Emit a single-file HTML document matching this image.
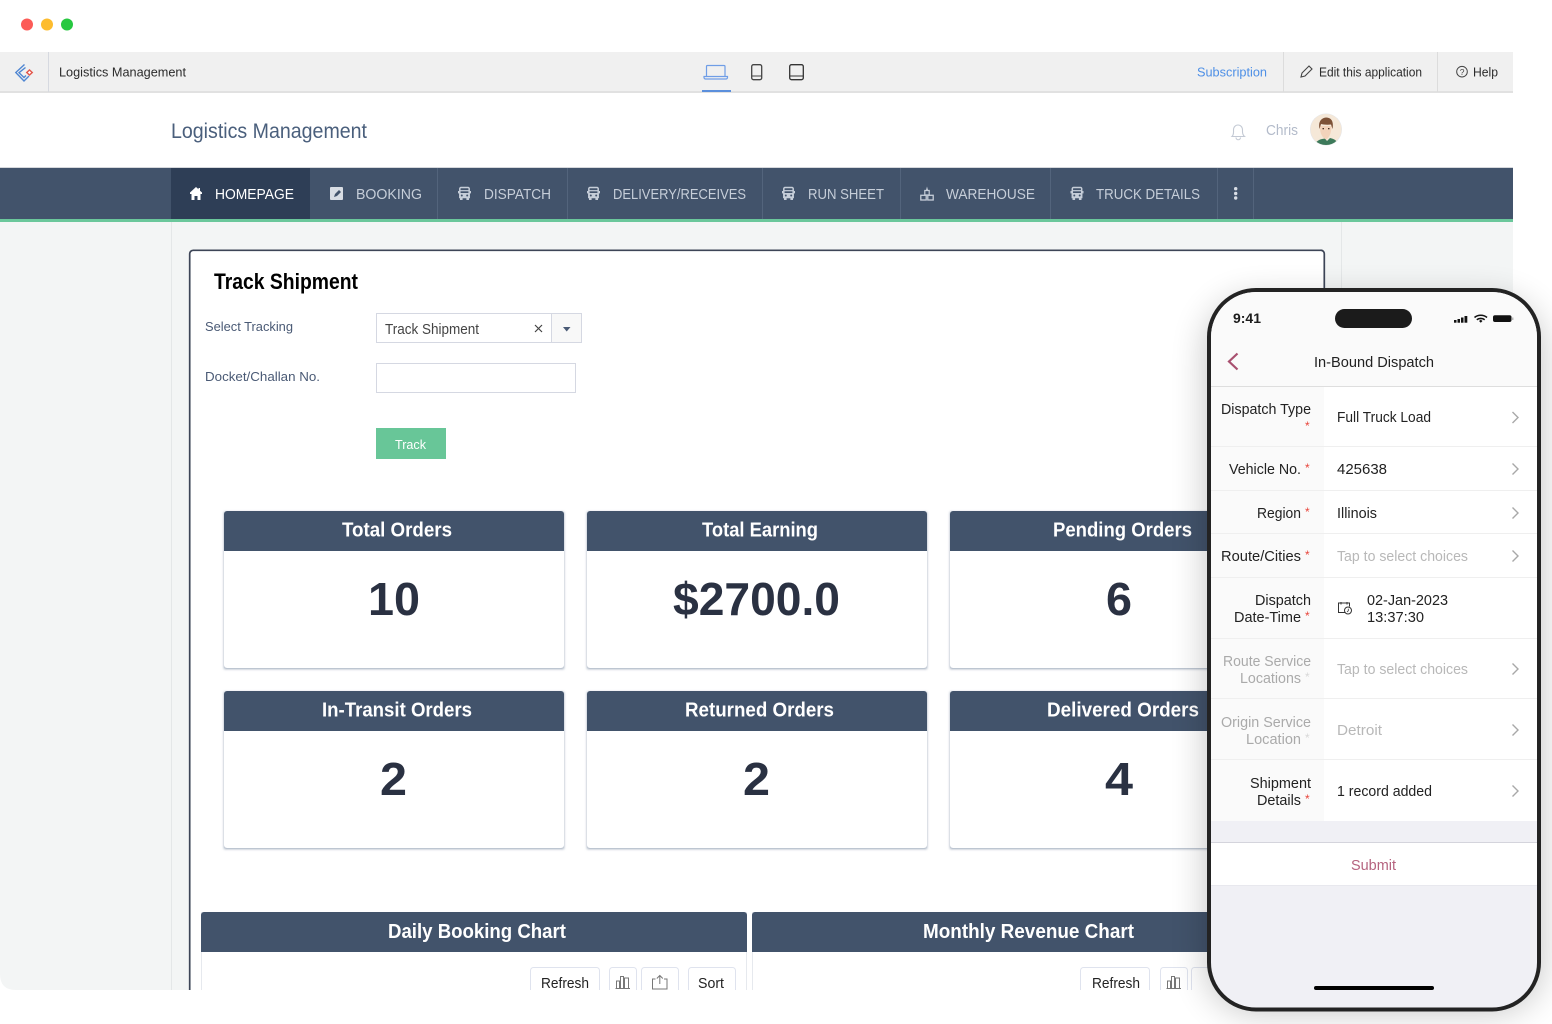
<!DOCTYPE html>
<html><head><meta charset="utf-8"><title>Logistics Management</title>
<style>
html,body{margin:0;padding:0;background:#fff;width:1552px;height:1024px;overflow:hidden}
svg{display:block;position:absolute;left:0;top:0}
text{font-family:"Liberation Sans",sans-serif;white-space:pre}
.nav{font-size:15px;fill:#c6ced9}
.ct{font-size:20px;font-weight:bold;fill:#fff}
.val{font-size:46px;font-weight:bold;fill:#2a3142}
.pl{font-size:14.5px;fill:#222}
.pg{font-size:14.5px;fill:#aaa}
.pv{font-size:14.5px;fill:#222}
.ph{font-size:14.5px;fill:#b8b8b8}
.st{font-size:12px;fill:#e8453c}
.chev{fill:none;stroke:#a8a8a8;stroke-width:1.4}
.btn{fill:#fff;stroke:#dfe3ee;stroke-width:1}
</style></head><body>
<svg width="1552" height="1024" viewBox="0 0 1552 1024" xmlns="http://www.w3.org/2000/svg">
<defs>
<clipPath id="win"><path d="M0 0H1513V990H16Q0 990 0 974Z"/></clipPath>
<clipPath id="av"><circle cx="1326" cy="129.500" r="15.500"/></clipPath>
<filter id="blur" x="-20%" y="-20%" width="140%" height="140%"><feGaussianBlur stdDeviation="18"/></filter>
<filter id="cs" x="-5%" y="-5%" width="110%" height="110%"><feGaussianBlur stdDeviation="1.2"/></filter>
<g id="bus"><path d="M3.500 1.500H10.500A1.200 1.200 0 0 1 11.700 2.700V11.500H2.300V2.700A1.200 1.200 0 0 1 3.500 1.500Z" fill="none" stroke="#c6ced9" stroke-width="1.500"/><path d="M2 7H12V12H2Z" fill="#c6ced9"/><path d="M3 4.700H11" stroke="#c6ced9" stroke-width="1.200"/><rect x="2.500" y="12" width="2.600" height="2" fill="#c6ced9"/><rect x="8.900" y="12" width="2.600" height="2" fill="#c6ced9"/><circle cx="4.300" cy="9.500" r="1" fill="#42536b"/><circle cx="9.700" cy="9.500" r="1" fill="#42536b"/><rect x="0.500" y="5" width="1" height="2.400" fill="#c6ced9"/><rect x="12.500" y="5" width="1" height="2.400" fill="#c6ced9"/></g>
</defs>

<g clip-path="url(#win)">
<rect width="1513" height="990" fill="#fff"/>
<!-- top bar -->
<rect y="52" width="1513" height="40" fill="#f0f0f0"/>
<rect y="91" width="1513" height="2" fill="#e1e1e1"/>
<rect x="48" y="52" width="1" height="40" fill="#d6d9e0"/>
<rect x="1283" y="52" width="1" height="40" fill="#dcdcdc"/>
<rect x="1437" y="52" width="1" height="40" fill="#dcdcdc"/>
<path d="M24.500 64.500L15.800 72.500L24 81L29 76M25.500 67.500L19 72.700L24 77.500L26 75.500" fill="none" stroke="#4f86d2" stroke-width="1.400"/>
<path d="M29.500 70L32.200 72.500L29.500 75L26.800 72.500Z" fill="#fff" stroke="#e2584d" stroke-width="1.500"/>
<text x="59" y="76.500" font-size="13" fill="#2b2b2b" textLength="127" lengthAdjust="spacingAndGlyphs">Logistics Management</text>
<!-- device icons -->
<path d="M706.500 77V66.500A1 1 0 0 1 707.500 65.500H724A1 1 0 0 1 725 66.500V77" fill="none" stroke="#6f9de6" stroke-width="1.200"/>
<path d="M704 76.500H727.500V77.500A1.500 1.500 0 0 1 726 79H705.500A1.500 1.500 0 0 1 704 77.500Z" fill="none" stroke="#6f9de6" stroke-width="1.200"/>
<rect x="702" y="90" width="29" height="2" fill="#5b8fdc"/>
<rect x="751.700" y="64.700" width="10" height="15" rx="1.800" fill="none" stroke="#444" stroke-width="1.300"/>
<path d="M752 76H761.500" stroke="#444" stroke-width="1"/>
<rect x="789.700" y="64.700" width="13.600" height="15" rx="1.800" fill="none" stroke="#333" stroke-width="1.300"/>
<path d="M790 76H803" stroke="#333" stroke-width="1"/>
<text x="1197" y="76.500" font-size="13" fill="#4d8fe6" textLength="70" lengthAdjust="spacingAndGlyphs">Subscription</text>
<path d="M1301 77L1302 73L1309 66L1312 69L1305 76Z" fill="none" stroke="#444" stroke-width="1.100"/>
<text x="1319" y="76.500" font-size="13" fill="#2b2b2b" textLength="103" lengthAdjust="spacingAndGlyphs">Edit this application</text>
<circle cx="1462" cy="71.700" r="5.300" fill="none" stroke="#444" stroke-width="1"/>
<text x="1459.800" y="75" font-size="8.500" fill="#444">?</text>
<text x="1473" y="76.500" font-size="13" fill="#2b2b2b" textLength="25" lengthAdjust="spacingAndGlyphs">Help</text>
<!-- header -->
<text x="171" y="138" font-size="21" fill="#4a5f7c" textLength="196" lengthAdjust="spacingAndGlyphs">Logistics Management</text>
<path d="M1232 136.500C1234 134.500 1233.500 132 1233.500 130C1233.500 127 1235.500 125 1238 125C1240.500 125 1242.500 127 1242.500 130C1242.500 132 1242 134.500 1244.500 136.500Z M1236 137.500A2.200 2.200 0 0 0 1240.500 137.500" fill="none" stroke="#c3c9d4" stroke-width="1.100"/>
<text x="1266" y="135" font-size="15" fill="#b3bbca" textLength="32" lengthAdjust="spacingAndGlyphs">Chris</text>
<circle cx="1326" cy="129.500" r="16" fill="#e4e6ea"/>
<g clip-path="url(#av)">
<rect x="1310" y="113" width="32" height="33" fill="#f5e8d8"/>
<path d="M1314 146C1316 140 1321 139 1325 138.500L1327 141L1330 138C1334 139 1337 140 1339 146Z" fill="#3d7a5b"/>
<path d="M1320 126C1319.500 132 1322 138 1326 139.500C1329.500 138 1331.500 132 1331.500 126Z" fill="#f3d3bb"/>
<path d="M1319.500 129C1318 122 1321 118 1326 117.500C1331 117.500 1334 121 1332.500 129L1331 124.500C1327 125 1323 124.500 1321 124Z" fill="#7d5238"/>
<rect x="1322.500" y="128" width="1.500" height="1.300" fill="#4a3528"/><rect x="1328" y="128" width="1.500" height="1.300" fill="#4a3528"/>
</g>
<!-- nav -->
<rect y="167" width="1513" height="1" fill="#d6d8dc"/>
<rect y="168" width="1513" height="51" fill="#42536b"/>
<rect x="171" y="168" width="139" height="51" fill="#2e3e56"/>
<rect y="219" width="1513" height="3" fill="#6ac79b"/>
<g fill="#53647c"><rect x="437" y="168" width="1" height="51"/><rect x="567" y="168" width="1" height="51"/><rect x="762" y="168" width="1" height="51"/><rect x="900" y="168" width="1" height="51"/><rect x="1050" y="168" width="1" height="51"/><rect x="1217" y="168" width="1" height="51"/><rect x="1253" y="168" width="1" height="51"/></g>
<path d="M196 187L190 192.500V194H191.500V200H194.500V196H197.500V200H200.500V194H202V192.500L200 190.700V188H198.500V189.300Z" fill="#fff"/>
<text x="215" y="199" class="nav" style="fill:#fff" textLength="79" lengthAdjust="spacingAndGlyphs">HOMEPAGE</text>
<rect x="330" y="187" width="13" height="13" rx="1" fill="#d8dde4"/>
<path d="M334 197L335 194L339 190L341 192L337 196Z" fill="#42536b"/>
<text x="356" y="199" class="nav" textLength="66" lengthAdjust="spacingAndGlyphs">BOOKING</text>
<use href="#bus" x="457.500" y="186"/>
<text x="484" y="199" class="nav" textLength="67" lengthAdjust="spacingAndGlyphs">DISPATCH</text>
<use href="#bus" x="586.500" y="186"/>
<text x="613" y="199" class="nav" textLength="133" lengthAdjust="spacingAndGlyphs">DELIVERY/RECEIVES</text>
<use href="#bus" x="781.500" y="186"/>
<text x="808" y="199" class="nav" textLength="76" lengthAdjust="spacingAndGlyphs">RUN SHEET</text>
<path d="M927 186.500L926 190H928Z" fill="#c6ced9"/>
<path d="M924.800 190.500H929.200V195H924.800Z" fill="none" stroke="#c6ced9" stroke-width="1.200"/>
<rect x="920.800" y="195.300" width="5.400" height="4.700" fill="none" stroke="#c6ced9" stroke-width="1.300"/>
<rect x="927.800" y="195.300" width="5.400" height="4.700" fill="none" stroke="#c6ced9" stroke-width="1.300"/>
<text x="946" y="199" class="nav" textLength="89" lengthAdjust="spacingAndGlyphs">WAREHOUSE</text>
<use href="#bus" x="1070" y="186"/>
<text x="1096" y="199" class="nav" textLength="104" lengthAdjust="spacingAndGlyphs">TRUCK DETAILS</text>
<g fill="#d9dee6"><circle cx="1235.700" cy="188.700" r="1.700"/><circle cx="1235.700" cy="193.500" r="1.700"/><circle cx="1235.700" cy="198" r="1.700"/></g>
<!-- body bg -->
<rect y="222" width="1513" height="768" fill="#f3f5f5"/>
<rect x="171" y="222" width="1" height="768" fill="#e4e7e8"/>
<rect x="1341" y="222" width="1" height="768" fill="#e4e7e8"/>
<!-- panel -->
<path d="M189.700 1000V254A3.500 3.500 0 0 1 193.200 250.300H1320.500A3.500 3.500 0 0 1 1324.300 254V1000Z" fill="#fff" stroke="#3d4557" stroke-width="1.700"/>
<text x="214" y="289" font-size="22" font-weight="bold" fill="#000" textLength="144" lengthAdjust="spacingAndGlyphs">Track Shipment</text>
<text x="205" y="331" font-size="13" fill="#4a5a75" textLength="88" lengthAdjust="spacingAndGlyphs">Select Tracking</text>
<text x="205" y="381" font-size="13" fill="#4a5a75" textLength="115" lengthAdjust="spacingAndGlyphs">Docket/Challan No.</text>
<rect x="376.500" y="313.500" width="205" height="29" fill="#fff" stroke="#d5d8e2"/>
<rect x="552" y="314" width="29" height="28" fill="#f8f8f8"/>
<rect x="551" y="314" width="1" height="28" fill="#d5d8e2"/>
<text x="385" y="334" font-size="14.500" fill="#444" textLength="94" lengthAdjust="spacingAndGlyphs">Track Shipment</text>
<path d="M535 325L542 332M542 325L535 332" stroke="#444" stroke-width="1.200"/>
<path d="M563 327H570.500L566.700 331.500Z" fill="#4a5a75"/>
<rect x="376.500" y="363.500" width="199" height="29" fill="#fff" stroke="#d5d8e2"/>
<rect x="376" y="428" width="70" height="31" fill="#68c698"/>
<text x="395" y="449" font-size="13" fill="#fff" textLength="31" lengthAdjust="spacingAndGlyphs">Track</text>
<!-- cards -->
<g>
<rect x="224" y="512" width="340" height="157" fill="#9aa6b8" filter="url(#cs)"/>
<rect x="587" y="512" width="340" height="157" fill="#9aa6b8" filter="url(#cs)"/>
<rect x="950" y="512" width="340" height="157" fill="#9aa6b8" filter="url(#cs)"/>
<rect x="224" y="692" width="340" height="157" fill="#9aa6b8" filter="url(#cs)"/>
<rect x="587" y="692" width="340" height="157" fill="#9aa6b8" filter="url(#cs)"/>
<rect x="950" y="692" width="340" height="157" fill="#9aa6b8" filter="url(#cs)"/>
<rect x="224" y="511" width="340" height="157" rx="3" fill="#fff"/>
<rect x="587" y="511" width="340" height="157" rx="3" fill="#fff"/>
<rect x="950" y="511" width="340" height="157" rx="3" fill="#fff"/>
<rect x="224" y="691" width="340" height="157" rx="3" fill="#fff"/>
<rect x="587" y="691" width="340" height="157" rx="3" fill="#fff"/>
<rect x="950" y="691" width="340" height="157" rx="3" fill="#fff"/>
<g fill="#42536b">
<path d="M224 551V514A3 3 0 0 1 227 511H561A3 3 0 0 1 564 514V551Z"/>
<path d="M587 551V514A3 3 0 0 1 590 511H924A3 3 0 0 1 927 514V551Z"/>
<path d="M950 551V514A3 3 0 0 1 953 511H1287A3 3 0 0 1 1290 514V551Z"/>
<path d="M224 731V694A3 3 0 0 1 227 691H561A3 3 0 0 1 564 694V731Z"/>
<path d="M587 731V694A3 3 0 0 1 590 691H924A3 3 0 0 1 927 694V731Z"/>
<path d="M950 731V694A3 3 0 0 1 953 691H1287A3 3 0 0 1 1290 694V731Z"/>
</g>
</g>
<text x="342" y="536.500" class="ct" textLength="110" lengthAdjust="spacingAndGlyphs">Total Orders</text>
<text x="702" y="536.500" class="ct" textLength="116" lengthAdjust="spacingAndGlyphs">Total Earning</text>
<text x="1053" y="536.500" class="ct" textLength="139" lengthAdjust="spacingAndGlyphs">Pending Orders</text>
<text x="322" y="716.500" class="ct" textLength="150" lengthAdjust="spacingAndGlyphs">In-Transit Orders</text>
<text x="685" y="716.500" class="ct" textLength="149" lengthAdjust="spacingAndGlyphs">Returned Orders</text>
<text x="1047" y="716.500" class="ct" textLength="152" lengthAdjust="spacingAndGlyphs">Delivered Orders</text>
<text x="368" y="615" class="val" textLength="52" lengthAdjust="spacingAndGlyphs">10</text>
<text x="673" y="615" class="val" textLength="167" lengthAdjust="spacingAndGlyphs">$2700.0</text>
<text x="1106" y="615" class="val" textLength="26" lengthAdjust="spacingAndGlyphs">6</text>
<text x="380" y="795" class="val" textLength="27" lengthAdjust="spacingAndGlyphs">2</text>
<text x="743" y="795" class="val" textLength="27" lengthAdjust="spacingAndGlyphs">2</text>
<text x="1105" y="795" class="val" textLength="28" lengthAdjust="spacingAndGlyphs">4</text>
<!-- charts -->
<rect x="201.500" y="912.500" width="545" height="90" fill="#fff" stroke="#e6e9ee"/>
<rect x="752.500" y="912.500" width="560" height="90" fill="#fff" stroke="#e6e9ee"/>
<path d="M201 952V915A3 3 0 0 1 204 912H744A3 3 0 0 1 747 915V952Z" fill="#42536b"/>
<path d="M752 952V915A3 3 0 0 1 755 912H1310V952Z" fill="#42536b"/>
<text x="388" y="938" class="ct" textLength="178" lengthAdjust="spacingAndGlyphs">Daily Booking Chart</text>
<text x="923" y="938" class="ct" textLength="211" lengthAdjust="spacingAndGlyphs">Monthly Revenue Chart</text>
<rect class="btn" x="530.500" y="967.500" width="69" height="40" rx="3"/>
<rect class="btn" x="609.500" y="967.500" width="27" height="40" rx="3"/>
<rect class="btn" x="641.500" y="967.500" width="37" height="40" rx="3"/>
<rect class="btn" x="688.500" y="967.500" width="47" height="40" rx="3"/>
<rect class="btn" x="1080.500" y="967.500" width="69" height="40" rx="3"/>
<rect class="btn" x="1160.500" y="967.500" width="27" height="40" rx="3"/>
<rect class="btn" x="1191.500" y="967.500" width="37" height="40" rx="3"/>
<text x="541" y="988" font-size="14.500" fill="#222" textLength="48" lengthAdjust="spacingAndGlyphs">Refresh</text>
<text x="698" y="988" font-size="14.500" fill="#222" textLength="26" lengthAdjust="spacingAndGlyphs">Sort</text>
<text x="1092" y="988" font-size="14.500" fill="#222" textLength="48" lengthAdjust="spacingAndGlyphs">Refresh</text>
<g fill="none" stroke="#777" stroke-width="1">
<path d="M616.500 988V981H619.500V988M620.500 988V976.500H623.500V988M624.500 988V978H628.500V988M615.500 988.500H630"/>
<path d="M1167.500 988V981H1170.500V988M1171.500 988V976.500H1174.500V988M1175.500 988V978H1179.500V988M1166.500 988.500H1181"/>
<path d="M655.500 979H652.500V989H667V979H664M659.800 984V975.500M656.800 978.500L659.800 975.500L662.800 978.500"/>
</g>
</g>

<!-- phone -->
<rect x="1207" y="300" width="334" height="711" rx="48" fill="#000" opacity=".24" filter="url(#blur)"/>
<rect x="1209" y="290" width="330" height="719.500" rx="47" fill="#f0f0f5" stroke="#232323" stroke-width="4"/>
<clipPath id="scr"><rect x="1211" y="292" width="326" height="716" rx="45"/></clipPath>
<g clip-path="url(#scr)">
<rect x="1211" y="292" width="326" height="94" fill="#fafafa"/>
<rect x="1211" y="386" width="326" height="1" fill="#dedede"/>
<rect x="1211" y="387" width="326" height="434" fill="#fff"/>
<rect x="1211" y="387" width="113" height="434" fill="#fafafa"/>
<g fill="#efefef"><rect x="1211" y="446" width="326" height="1"/><rect x="1211" y="490" width="326" height="1"/><rect x="1211" y="533" width="326" height="1"/><rect x="1211" y="577" width="326" height="1"/><rect x="1211" y="638" width="326" height="1"/><rect x="1211" y="698" width="326" height="1"/><rect x="1211" y="759" width="326" height="1"/></g>
<rect x="1211" y="843" width="326" height="42" fill="#fff"/>
<rect x="1211" y="842" width="326" height="1" fill="#d4d4dc"/>
<rect x="1211" y="885" width="326" height="1" fill="#e8e8ee"/>
</g>
<text x="1233" y="323" font-size="13.500" font-weight="bold" fill="#1c1c1c" textLength="28" lengthAdjust="spacingAndGlyphs">9:41</text>
<rect x="1335" y="309" width="77" height="19" rx="9.500" fill="#1b1b1b"/>
<g fill="#111"><rect x="1454" y="320" width="2.500" height="2.700"/><rect x="1457.500" y="319" width="2.500" height="3.700"/><rect x="1461" y="317.500" width="2.500" height="5.200"/><rect x="1464.500" y="316" width="2.800" height="6.700"/></g>
<path d="M1474.500 317.500C1478 314.500 1483.500 314.500 1487 317.500M1476.800 319.700C1479 318 1482.500 318 1484.700 319.700" fill="none" stroke="#111" stroke-width="1.600"/>
<path d="M1479 321L1480.800 319.800L1482.500 321L1480.800 322.700Z" fill="#111"/>
<rect x="1493" y="315.300" width="18.500" height="6.700" rx="2" fill="#111"/><rect x="1512.300" y="317.500" width="1" height="2.500" fill="#999"/>
<path d="M1237.500 353.500L1229 361.500L1237.500 369.500" fill="none" stroke="#a8506f" stroke-width="2.200"/>
<text x="1314" y="367" font-size="15" fill="#222" textLength="120" lengthAdjust="spacingAndGlyphs">In-Bound Dispatch</text>

<text x="1221" y="414" class="pl" textLength="90" lengthAdjust="spacingAndGlyphs">Dispatch Type</text>
<text x="1229" y="474" class="pl" textLength="72" lengthAdjust="spacingAndGlyphs">Vehicle No.</text>
<text x="1257" y="518" class="pl" textLength="44" lengthAdjust="spacingAndGlyphs">Region</text>
<text x="1221" y="561" class="pl" textLength="80" lengthAdjust="spacingAndGlyphs">Route/Cities</text>
<text x="1255" y="605" class="pl" textLength="56" lengthAdjust="spacingAndGlyphs">Dispatch</text>
<text x="1234" y="622" class="pl" textLength="67" lengthAdjust="spacingAndGlyphs">Date-Time</text>
<text x="1223" y="666" class="pg" textLength="88" lengthAdjust="spacingAndGlyphs">Route Service</text>
<text x="1240" y="683" class="pg" textLength="61" lengthAdjust="spacingAndGlyphs">Locations</text>
<text x="1221" y="727" class="pg" textLength="90" lengthAdjust="spacingAndGlyphs">Origin Service</text>
<text x="1246" y="744" class="pg" textLength="55" lengthAdjust="spacingAndGlyphs">Location</text>
<text x="1250" y="788" class="pl" textLength="61" lengthAdjust="spacingAndGlyphs">Shipment</text>
<text x="1257" y="805" class="pl" textLength="44" lengthAdjust="spacingAndGlyphs">Details</text>
<text x="1305" y="430" class="st">*</text>
<text x="1305" y="472" class="st">*</text>
<text x="1305" y="516" class="st">*</text>
<text x="1305" y="559" class="st">*</text>
<text x="1305" y="620" class="st">*</text>
<text x="1305" y="681" class="st" style="fill:#d8d8d8">*</text>
<text x="1305" y="742" class="st" style="fill:#d8d8d8">*</text>
<text x="1305" y="803" class="st">*</text>

<text x="1337" y="422" class="pv" textLength="94" lengthAdjust="spacingAndGlyphs">Full Truck Load</text>
<text x="1337" y="474" class="pv" textLength="50" lengthAdjust="spacingAndGlyphs">425638</text>
<text x="1337" y="518" class="pv" textLength="40" lengthAdjust="spacingAndGlyphs">Illinois</text>
<text x="1337" y="561" class="ph" textLength="131" lengthAdjust="spacingAndGlyphs">Tap to select choices</text>
<text x="1367" y="605" class="pv" textLength="81" lengthAdjust="spacingAndGlyphs">02-Jan-2023</text>
<text x="1367" y="622" class="pv" textLength="57" lengthAdjust="spacingAndGlyphs">13:37:30</text>
<text x="1337" y="674" class="ph" textLength="131" lengthAdjust="spacingAndGlyphs">Tap to select choices</text>
<text x="1337" y="735" class="ph" textLength="45" lengthAdjust="spacingAndGlyphs">Detroit</text>
<text x="1337" y="796" class="pv" textLength="95" lengthAdjust="spacingAndGlyphs">1 record added</text>

<path d="M1345 612.500H1338.500V603H1349.500V606.500M1341 602V604.500M1347 602V604.500" fill="none" stroke="#333" stroke-width="1"/>
<circle cx="1348" cy="610.500" r="3.500" fill="#fff" stroke="#333" stroke-width="1"/>
<path d="M1348.300 608.800V610.800L1347 612" fill="none" stroke="#333" stroke-width=".8"/>
<path class="chev" d="M1512.500 412L1518 417.500L1512.500 423"/>
<path class="chev" d="M1512.500 463.500L1518 469L1512.500 474.500"/>
<path class="chev" d="M1512.500 507.500L1518 513L1512.500 518.500"/>
<path class="chev" d="M1512.500 550.500L1518 556L1512.500 561.500"/>
<path class="chev" d="M1512.500 663.500L1518 669L1512.500 674.500"/>
<path class="chev" d="M1512.500 724.500L1518 730L1512.500 735.500"/>
<path class="chev" d="M1512.500 785.500L1518 791L1512.500 796.500"/>
<text x="1351" y="870" font-size="14.500" fill="#b5637f" textLength="45" lengthAdjust="spacingAndGlyphs">Submit</text>
<rect x="1314" y="986" width="120" height="4" rx="2" fill="#000"/>

<!-- traffic lights -->
<circle cx="27" cy="24.500" r="6" fill="#fc5b57"/>
<circle cx="47" cy="24.500" r="6" fill="#fdbc2e"/>
<circle cx="67" cy="24.500" r="6" fill="#27c840"/>
</svg>
</body></html>
